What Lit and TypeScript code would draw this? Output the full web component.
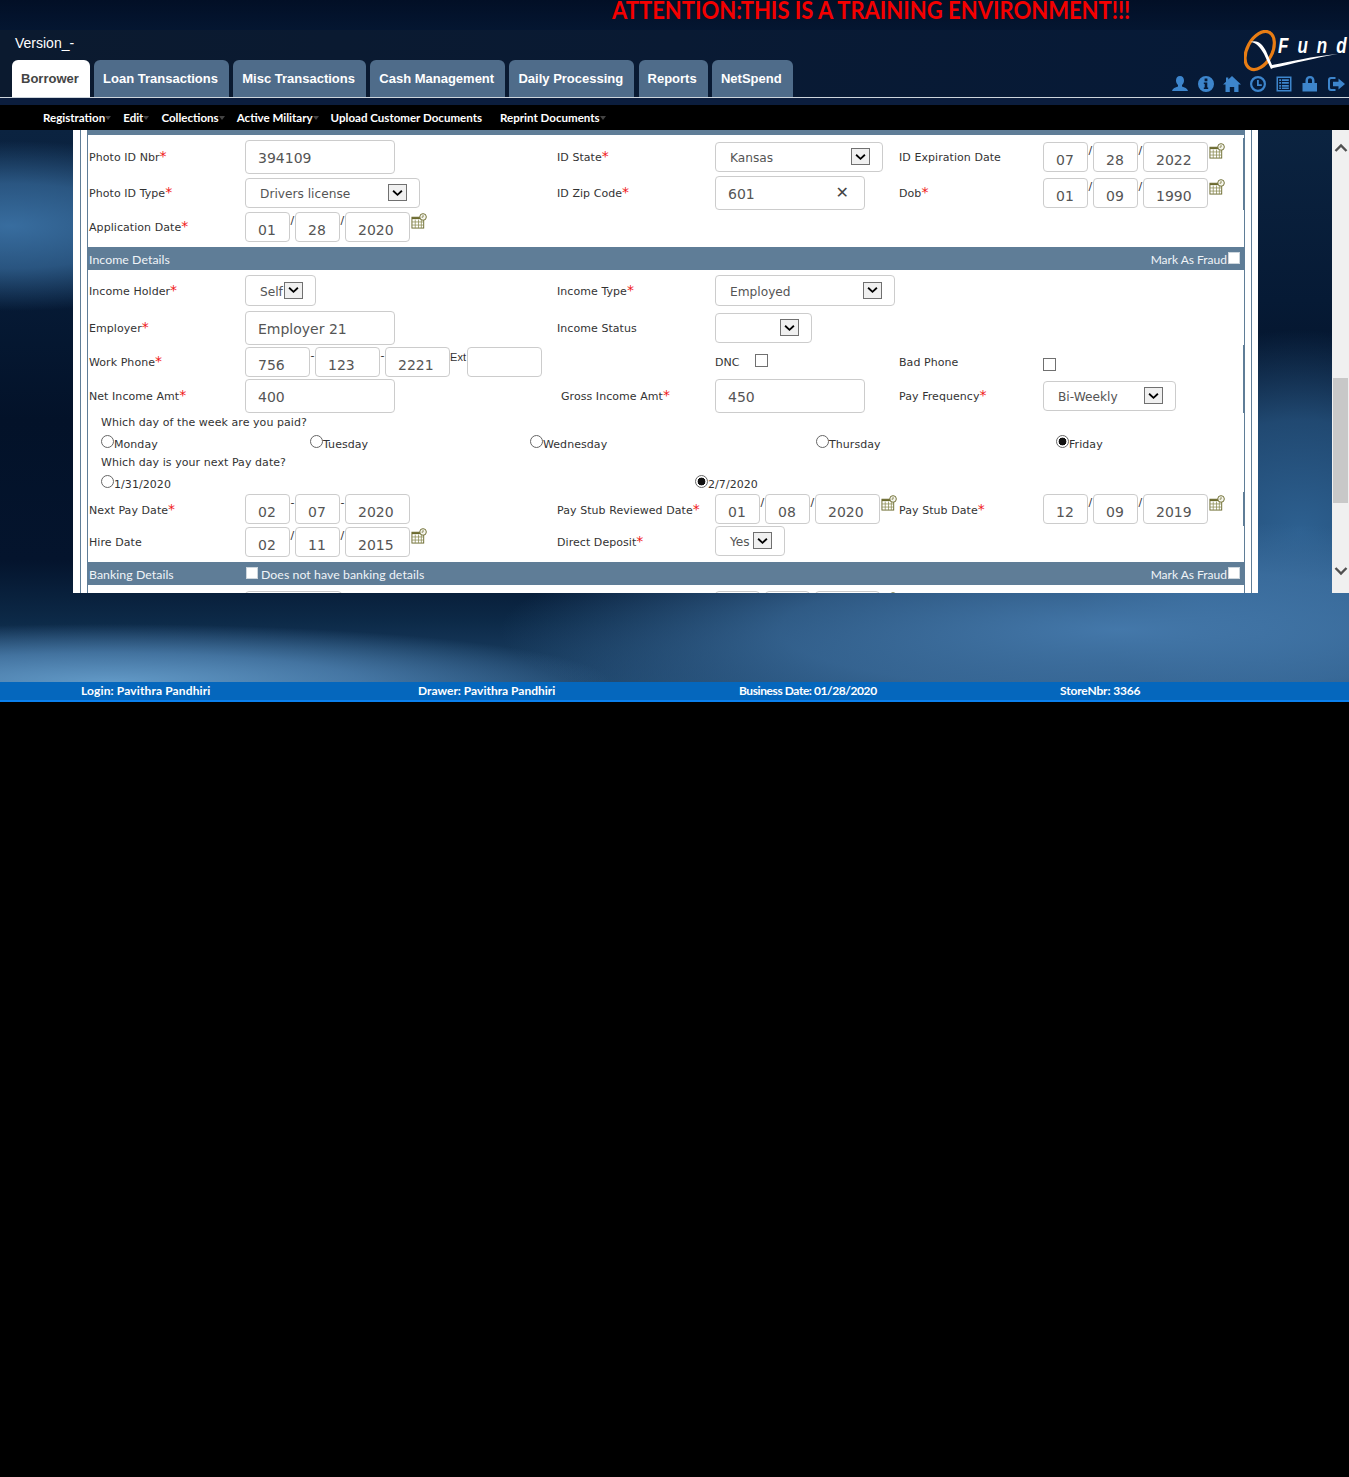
import { LitElement, html, css, svg, TemplateResult } from 'lit';
import { customElement } from 'lit/decorators.js';

const TABS = [
  'Borrower',
  'Loan Transactions',
  'Misc Transactions',
  'Cash Management',
  'Daily Processing',
  'Reports',
  'NetSpend',
];

const SUBMENU: [string, boolean][] = [
  ['Registration', true],
  ['Edit', true],
  ['Collections', true],
  ['Active Military', true],
  ['Upload Customer Documents', false],
  ['Reprint Documents', true],
];

const ICONS = [
  svg`<path d="M9 1c2.600 0 4 2 4 4.400 0 2-1 3.600-2 4.600v1.400c2.600.8 5.400 1.800 6 4.600H1c.6-2.800 3.400-3.800 6-4.600V10C6 9 5 7.400 5 5.400 5 3 6.400 1 9 1z"/>`,
  svg`<path fill-rule="evenodd" d="M9 1a8 8 0 1 1 0 16A8 8 0 0 1 9 1zM7.600 3.600v2.600h2.800V3.600zM6.800 7.600v1.500h.9v3.500h-.9v1.500h4.400v-1.500h-.9V7.600z"/>`,
  svg`<path d="M9 1 18 9.500h-2.500V17h-4.300v-5H6.800v5H2.500V9.500H0L3 6.700V2.500h2.300v2L9 1z"/>`,
  svg`<path fill-rule="evenodd" d="M9 1a8 8 0 1 1 0 16A8 8 0 0 1 9 1zm0 2.200a5.800 5.800 0 1 0 0 11.600A5.800 5.800 0 0 0 9 3.200zM8 5h1.800v4.200h3V11H8z"/>`,
  svg`<path fill-rule="evenodd" d="M1.500 1.500h15v15h-15zM3 3v12h12V3zM4.200 4.200h1.900v1.700H4.200zM7 4.200h6.800v1.700H7zM4.200 7.100h1.900v1.700H4.200zM7 7.100h6.800v1.700H7zM4.200 10h1.900v1.700H4.200zM7 10h6.800v1.700H7zM4.200 12.500h1.900v1.400H4.200zM7 12.500h6.800v1.400H7z"/>`,
  svg`<path fill-rule="evenodd" d="M9 1c2.900 0 4.500 1.900 4.500 4.400V8h2.500v8.500H1.500V8H4.500V5.400C4.500 2.900 6.100 1 9 1zm0 2.200c-1.200 0-2 .9-2 2.200V8h4V5.400c0-1.300-.8-2.200-2-2.200z"/>`,
  svg`<path d="M8.500 2H4a3 3 0 0 0-3 3v8a3 3 0 0 0 3 3h4.500v-2H4.300A1.300 1.300 0 0 1 3 12.700V5.300C3 4.600 3.600 4 4.300 4h4.200z"/><path d="M11.500 3.500 18 9l-6.500 5.500V11.300H6V6.700h5.500z"/>`,
];

const chevron = html`<svg viewBox="0 0 12 8" width="11" height="8">
  <path d="M1.200 1.500 6 6l4.800-4.500" fill="none" stroke="#000" stroke-width="2" />
</svg>`;

const calendar = html`<svg class="cal" viewBox="0 0 17 17" width="16" height="16">
  <rect x="1" y="4.500" width="12.500" height="11.500" fill="#fff" stroke="#6b6a2e" />
  <rect x="1" y="4.500" width="12.500" height="2" fill="#6b6a2e" />
  <path d="M1 9.500h12.500M1 12.800h12.500M4.500 7v9M8 7v9M11 7v9" stroke="#8a8950" stroke-width=".8" />
  <circle cx="12.800" cy="4.200" r="3.500" fill="#f6f6ee" stroke="#6b6a2e" />
  <path d="M12.800 2.200v2.200h-1.500" fill="none" stroke="#6b6a2e" stroke-width=".8" />
</svg>`;

@customElement('app-root')
export class AppRoot extends LitElement {
  label(text: string, required = false, extra = ''): TemplateResult {
    return html`<div class="label ${extra}">
      ${text}${required ? html`<span class="req">*</span>` : ''}
    </div>`;
  }

  field(value: string, width: number, extra = ''): TemplateResult {
    return html`<div class="field ${extra}" style="width:${width}px">${value}</div>`;
  }

  select(value: string, width: number, extra = ''): TemplateResult {
    return html`<div class="select ${extra}" style="width:${width}px">
      <span class="value">${value}</span><span class="arrow">${chevron}</span>
    </div>`;
  }

  parts(values: string[], sep: string, icon = true, last = 65): TemplateResult {
    return html`<div class="parts">
      ${values.map(
        (v, i) => html`${i > 0 ? html`<span class="sep">${sep}</span>` : ''}
        ${this.field(v, i === values.length - 1 ? last : 45, 'short')}`,
      )}
      ${icon ? calendar : ''}
    </div>`;
  }

  section(title: string, fraud = true, note = ''): TemplateResult {
    return html`<div class="section">
      <span class="section-title">${title}</span>
      ${note
        ? html`<span class="section-note"><input type="checkbox" class="white" />${note}</span>`
        : ''}
      ${fraud
        ? html`<span class="fraud">Mark As Fraud<input type="checkbox" class="white" /></span>`
        : ''}
    </div>`;
  }

  radio(text: string, checked = false): TemplateResult {
    return html`<label class="radio"><input type="radio" ?checked=${checked} /><span>${text}</span></label>`;
  }

  renderForm(): TemplateResult {
    return html`
      <div class="strip"></div>
      <div class="row edge" style="height:38px;margin-top:3px">
        ${this.label('Photo ID Nbr', true)}${this.field('394109', 150, 'tall')}
        ${this.label('ID State', true)}${this.select('Kansas', 168)}
        ${this.label('ID Expiration Date')}${this.parts(['07', '28', '2022'], '/')}
      </div>
      <div class="row edge" style="height:34px">
        ${this.label('Photo ID Type', true)}${this.select('Drivers license', 175)}
        ${this.label('ID Zip Code', true)}
        <div class="field tall zip" style="width:150px">601<span class="clear">✕</span></div>
        ${this.label('Dob', true)}${this.parts(['01', '09', '1990'], '/')}
      </div>
      <div class="row" style="height:34px;margin-bottom:3px">
        ${this.label('Application Date', true)}${this.parts(['01', '28', '2020'], '/')}
      </div>
      ${this.section('Income Details')}
      <div class="row nudge" style="height:41px">
        ${this.label('Income Holder', true)}${this.select('Self', 71, 'h31')}
        ${this.label('Income Type', true)}${this.select('Employed', 180, 'h31')}
      </div>
      <div class="row" style="height:34px">
        ${this.label('Employer', true)}${this.field('Employer 21', 150, 'tall')}
        ${this.label('Income Status')}${this.select('', 97)}
      </div>
      <div class="row edge" style="height:34px">
        ${this.label('Work Phone', true)}
        <div class="parts phone">
          ${this.field('756', 65, 'short')}<span class="sep">-</span>
          ${this.field('123', 65, 'short')}<span class="sep">-</span>
          ${this.field('2221', 65, 'short')}<span class="ext">Ext</span>
          ${this.field('', 75, 'short')}
        </div>
        <div></div>
        <div class="dnc">
          <span>DNC</span><input type="checkbox" />
        </div>
        ${this.label('Bad Phone')}
        <div class="bad"><input type="checkbox" /></div>
      </div>
      <div class="row edge" style="height:34px">
        ${this.label('Net Income Amt', true)}${this.field('400', 150, 'tall')}
        ${this.label('Gross Income Amt', true, 'gross')}${this.field('450', 150, 'tall')}
        ${this.label('Pay Frequency', true)}${this.select('Bi-Weekly', 133)}
      </div>
      <div class="line" style="height:18px;line-height:20px">Which day of the week are you paid?</div>
      <div class="radios week" style="height:21px">
        ${this.radio('Monday')}${this.radio('Tuesday')}${this.radio('Wednesday')}
        ${this.radio('Thursday')}${this.radio('Friday', true)}
      </div>
      <div class="line" style="height:20px;line-height:22px">Which day is your next Pay date?</div>
      <div class="radios next" style="height:20px">
        ${this.radio('1/31/2020')}${this.radio('2/7/2020', true)}
      </div>
      <div class="row edge nudge" style="height:34px">
        ${this.label('Next Pay Date', true)}${this.parts(['02', '07', '2020'], '-', false)}
        ${this.label('Pay Stub Reviewed Date', true)}${this.parts(['01', '08', '2020'], '/')}
        ${this.label('Pay Stub Date', true)}${this.parts(['12', '09', '2019'], '/')}
      </div>
      <div class="row hire">
        ${this.label('Hire Date')}${this.parts(['02', '11', '2015'], '/')}
        ${this.label('Direct Deposit', true)}${this.select('Yes', 70)}
      </div>
      ${this.section('Banking Details', true, 'Does not have banking details')}
      <div class="row cut">
        <div></div>${this.field('', 97, 'short')}<div></div>
        ${this.parts(['', '', ''], '/')}
      </div>
    `;
  }

  render(): TemplateResult {
    return html`
      <div class="app">
        <div class="banner"><span>ATTENTION:THIS IS A TRAINING ENVIRONMENT!!!</span></div>
        <header>
          <div class="head-left">
            <div class="version">Version_-</div>
            <nav class="tabs">
              ${TABS.map(
                (t, i) => html`<div class="tab ${i === 0 ? 'active' : ''}">${t}</div>`,
              )}
            </nav>
          </div>
          <div class="head-right">
            <div class="logo">
              <svg viewBox="0 0 100 42" width="100" height="42">
                <ellipse
                  cx="15.700"
                  cy="20.500"
                  rx="12.500"
                  ry="20.500"
                  transform="rotate(28 15.700 20.500)"
                  fill="none"
                  stroke="#e87d14"
                  stroke-width="3.200"
                />
                <path
                  d="M6 12c8-3 13 3 16 9l6 14c18-3 40-9 66-11-24 4-46 10-65 14l-2 1-7-15C16 17 12 12 6 12z"
                  fill="#fff"
                />
              </svg>
              <span class="fund"><span class="spread">Fun</span>d</span>
            </div>
            <div class="icons">
              ${ICONS.map(
                (p) => html`<svg viewBox="0 0 18 18" width="18" height="18" fill="#3d85cc">${p}</svg>`,
              )}
            </div>
          </div>
        </header>
        <div class="under"></div>
        <div class="submenu">
          ${SUBMENU.map(
            ([t, arrow]) => html`<span class="sub ${arrow ? 'has-arrow' : ''}">${t}</span>`,
          )}
        </div>
        <main>
          <div class="viewport">
            <div class="frame">
              <div class="frame-inner">
                <div class="box">${this.renderForm()}</div>
              </div>
            </div>
          </div>
          <aside class="scrollbar">
            <svg class="up" viewBox="0 0 14 10" width="14" height="10">
              <path d="M1.500 8 7 2.500 12.500 8" fill="none" stroke="#505050" stroke-width="2.400" />
            </svg>
            <div class="thumb"></div>
            <svg class="down" viewBox="0 0 14 10" width="14" height="10">
              <path d="M1.500 2 7 7.500 12.500 2" fill="none" stroke="#505050" stroke-width="2.400" />
            </svg>
          </aside>
        </main>
        <div class="spacer"></div>
        <footer>
          <span>Login: Pavithra Pandhiri</span>
          <span>Drawer: Pavithra Pandhiri</span>
          <span>Business Date: 01/28/2020</span>
          <span>StoreNbr: 3366</span>
        </footer>
      </div>
    `;
  }

  static styles = css`
    :host {
      display: block;
      height: 1477px;
      background: #000;
      overflow: hidden;
    }
    .app {
      display: flex;
      flex-direction: column;
      height: 702px;
      background:
        radial-gradient(ellipse 500px 58px at 110px 682px, #6299c6 0%, rgba(90, 145, 195, 0.65) 50%, transparent 100%),
        radial-gradient(ellipse 620px 110px at 1120px 630px, #4478aa 0%, rgba(67, 119, 169, 0.65) 55%, transparent 100%),
        radial-gradient(ellipse 240px 200px at 1300px 530px, #2d6090 0%, rgba(45, 96, 144, 0.7) 55%, transparent 100%),
        radial-gradient(ellipse 260px 85px at 10px 226px, #386d9f 0%, rgba(56, 109, 159, 0.7) 50%, transparent 100%),
        linear-gradient(180deg, #0b2340 130px, #061a35 300px, #031229 420px, #04142d 560px, #0c2947 620px, #1f466c 682px);
    }
    .banner {
      height: 30px;
      padding-left: 612px;
      box-sizing: border-box;
      flex: none;
      background: linear-gradient(180deg, #020f26, #041631);
      color: #f40000;
      font: 700 22px/18px Lato, sans-serif;
      white-space: nowrap;
    }
    .banner span {
      display: inline-block;
      transform: scaleY(1.1);
      transform-origin: top;
    }
    header {
      flex: none;
      display: flex;
      justify-content: space-between;
      height: 68px;
      box-sizing: border-box;
      background: linear-gradient(90deg, #0b1a2f, #091a33 50%, #061a38);
      border-bottom: 1px solid #cdd5dc;
    }
    .head-left {
      display: flex;
      flex-direction: column;
      padding-left: 12px;
    }
    .version {
      height: 30px;
      padding: 5px 0 0 3px;
      box-sizing: border-box;
      color: #fff;
      font: 14px/17px 'Liberation Sans', sans-serif;
    }
    .tabs {
      display: flex;
      gap: 4.300px;
    }
    .tab {
      height: 37px;
      box-sizing: border-box;
      padding: 0 11px 0 9px;
      background: #4f6c8a;
      border-radius: 6px 6px 0 0;
      color: #fff;
      font: 700 13px/37px 'Liberation Sans', sans-serif;
      white-space: nowrap;
    }
    .tab.active {
      background: #fff;
      color: #444;
    }
    .head-right {
      display: flex;
      flex-direction: column;
      align-items: flex-end;
    }
    .logo {
      position: relative;
      width: 105px;
      height: 42px;
    }
    .logo svg {
      display: block;
    }
    .fund {
      position: absolute;
      left: 34px;
      top: 2px;
      color: #fff;
      font: italic 700 17px/22px 'Liberation Sans', sans-serif;
      white-space: nowrap;
      transform: scaleY(1.3);
      transform-origin: top;
    }
    .spread {
      letter-spacing: 9px;
    }
    .icons {
      display: flex;
      gap: 8px;
      padding-right: 4px;
      margin-top: 3px;
    }
    .under {
      flex: none;
      height: 7px;
      background: #0b1d3d;
    }
    .submenu {
      flex: none;
      height: 25px;
      display: flex;
      gap: 18px;
      padding-left: 43px;
      background: #000;
      color: #fff;
      font: 700 11.550px/25px Lato, sans-serif;
    }
    .sub {
      position: relative;
      white-space: nowrap;
    }
    .has-arrow::after {
      content: '';
      position: absolute;
      left: 100%;
      top: 11px;
      border: 3px solid transparent;
      border-top: 4px solid #444;
    }
    main {
      flex: none;
      display: flex;
      height: 463px;
    }
    .viewport {
      flex: 1;
      overflow: hidden;
      padding-left: 73px;
    }
    .frame {
      width: 1185px;
      box-sizing: border-box;
      padding: 0 6px 0 7px;
      background: #fff;
    }
    .frame-inner {
      padding: 0 6px;
      border: 0 solid #5f7d97;
      border-width: 0 1px;
    }
    .box {
      border: 0 solid #5f7d97;
      border-width: 0 1px;
      background: #fff;
      color: #333;
      font: 11px 'DejaVu Sans', sans-serif;
      letter-spacing: 0.06px;
    }
    .strip {
      height: 5px;
      background: #5f7d97;
    }
    .row {
      display: grid;
      grid-template-columns: 156px 312px 158px 184px 144px 1fr;
      align-items: center;
      padding-left: 1px;
      box-sizing: border-box;
    }
    .row.edge {
      border-right: 1px solid #5f7d97;
    }
    .row.nudge .label {
      padding-top: 2px;
    }
    .row.hire {
      height: 32px;
      margin-bottom: 4px;
      align-items: start;
    }
    .row.hire .label {
      align-self: center;
    }
    .row.hire .parts {
      margin-top: 1px;
    }
    .row.cut {
      height: 40px;
      padding-top: 6px;
      align-items: start;
    }
    .label {
      white-space: nowrap;
    }
    .label.gross {
      padding-left: 4px;
    }
    .req {
      color: #f01818;
      font-size: 14px;
      line-height: 1px;
    }
    .field,
    .select {
      box-sizing: border-box;
      background: #fff;
      border: 1px solid #ccc;
      border-radius: 4px;
      color: #555;
      white-space: nowrap;
      letter-spacing: 0;
    }
    .field {
      font-size: 14px;
      padding-left: 12px;
    }
    .field.tall {
      height: 34px;
      line-height: 35px;
    }
    .field.short {
      height: 30px;
      line-height: 35px;
    }
    .zip {
      display: flex;
      justify-content: space-between;
      padding-right: 15px;
    }
    .clear {
      font-size: 16px;
      line-height: 31px;
      color: #444;
    }
    .select {
      display: flex;
      align-items: center;
      justify-content: space-between;
      height: 30px;
      padding: 0 12px 0 14px;
      font-size: 12.200px;
    }
    .select.h31 {
      height: 31px;
    }
    .value {
      padding-top: 2px;
    }
    .arrow {
      display: flex;
      align-items: center;
      justify-content: center;
      width: 19px;
      height: 17px;
      box-sizing: border-box;
      margin-top: -1px;
      background: #f0f0f0;
      border: 1px solid #707070;
    }
    .parts {
      display: flex;
      align-items: flex-start;
    }
    .sep {
      width: 5px;
      line-height: 14px;
      margin-top: 2px;
      text-align: center;
    }
    .ext {
      width: 17px;
      line-height: 20px;
      font-family: 'Liberation Sans', sans-serif;
    }
    .cal {
      flex: none;
      margin: 1px 0 0 1px;
    }
    .section {
      display: flex;
      align-items: center;
      height: 23px;
      padding: 0 4px 0 1px;
      background: #5f7d97;
      color: #f0f4f8;
      font: 12px Lato, sans-serif;
    }
    .section-title {
      width: 156px;
      flex: none;
      font-size: 12.300px;
      padding-top: 1px;
    }
    .section-note {
      display: flex;
      align-items: center;
      margin-top: 1px;
      font-size: 12.300px;
    }
    .fraud {
      display: flex;
      align-items: center;
      margin: 1px 0 0 auto;
      letter-spacing: 0;
    }
    input[type='checkbox'] {
      appearance: none;
      box-sizing: border-box;
      width: 13px;
      height: 13px;
      margin: 0;
      background: #fff;
      border: 1px solid #707070;
    }
    input.white {
      width: 12px;
      height: 12px;
      margin: -3px 3px 0 1px;
      border: 1px solid #cdd6dd;
    }
    .fraud input.white {
      margin: -3px 0 0 1px;
    }
    .dnc {
      display: flex;
      align-items: center;
      gap: 15px;
    }
    .dnc input {
      margin-top: -3px;
    }
    .bad input {
      display: block;
      margin-top: 5px;
    }
    .line {
      padding-left: 13px;
    }
    .radios {
      display: grid;
      padding-left: 13px;
      align-items: start;
      box-sizing: border-box;
    }
    .radios.week {
      grid-template-columns: 209px 220px 286px 240px 1fr;
      padding-top: 4px;
    }
    .radios.next {
      grid-template-columns: 594px 1fr;
      padding-top: 3px;
    }
    .radio {
      display: flex;
      align-items: flex-start;
      line-height: 15px;
    }
    .radio span {
      margin-top: 2px;
    }
    input[type='radio'] {
      appearance: none;
      box-sizing: border-box;
      width: 13px;
      height: 13px;
      margin: 0;
      flex: none;
      background: #fff;
      border: 1px solid #666;
      border-radius: 50%;
    }
    input[type='radio']:checked {
      background: radial-gradient(circle, #111 0 3.600px, #fff 4.200px);
    }
    .scrollbar {
      flex: none;
      width: 17px;
      display: flex;
      flex-direction: column;
      align-items: center;
      background: #f0f0f0;
    }
    .up {
      margin-top: 13px;
    }
    .thumb {
      width: 15px;
      height: 125px;
      margin-top: 225px;
      background: #c8c8c8;
    }
    .down {
      margin-top: 63px;
    }
    .spacer {
      flex: none;
      height: 89px;
    }
    footer {
      flex: none;
      height: 20px;
      box-sizing: border-box;
      display: grid;
      grid-template-columns: 337px 321px 321px 1fr;
      padding-left: 81px;
      background: #0567bd;
      border-bottom: 2px solid #0a80ee;
      color: #fff;
      font: 700 12px/18px Lato, sans-serif;
    }
    footer span:nth-child(1) {
      letter-spacing: 0.13px;
    }
    footer span:nth-child(3) {
      letter-spacing: -0.42px;
    }
    footer span:nth-child(4) {
      letter-spacing: -0.15px;
    }
  `;
}
